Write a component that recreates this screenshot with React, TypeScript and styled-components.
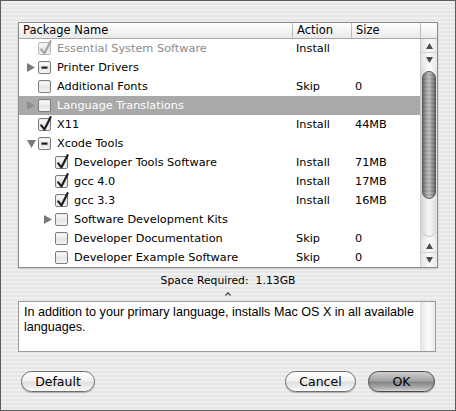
import React from "react";
import styled, { createGlobalStyle, css } from "styled-components";

type CheckState = "checked" | "mixed" | "none";

interface PackageRow {
  name: string;
  level: number;
  state: CheckState;
  disclosure?: "closed" | "open";
  disabled?: boolean;
  selected?: boolean;
  action: string;
  size: string;
}

const rows: PackageRow[] = [
  { name: "Essential System Software", level: 0, state: "checked", disabled: true, action: "Install", size: "" },
  { name: "Printer Drivers", level: 0, state: "mixed", disclosure: "closed", action: "", size: "" },
  { name: "Additional Fonts", level: 0, state: "none", action: "Skip", size: "0" },
  { name: "Language Translations", level: 0, state: "none", disclosure: "closed", selected: true, action: "", size: "" },
  { name: "X11", level: 0, state: "checked", action: "Install", size: "44MB" },
  { name: "Xcode Tools", level: 0, state: "mixed", disclosure: "open", action: "", size: "" },
  { name: "Developer Tools Software", level: 1, state: "checked", action: "Install", size: "71MB" },
  { name: "gcc 4.0", level: 1, state: "checked", action: "Install", size: "17MB" },
  { name: "gcc 3.3", level: 1, state: "checked", action: "Install", size: "16MB" },
  { name: "Software Development Kits", level: 1, state: "none", disclosure: "closed", action: "", size: "" },
  { name: "Developer Documentation", level: 1, state: "none", action: "Skip", size: "0" },
  { name: "Developer Example Software", level: 1, state: "none", action: "Skip", size: "0" },
];

const GlobalStyle = createGlobalStyle`
  html, body {
    margin: 0;
    padding: 0;
    background: #ececec;
  }
  * {
    box-sizing: border-box;
  }
`;

const Window = styled.div`
  width: 456px;
  height: 411px;
  border: 1px solid #5c5c5c;
  background-color: #ececec;
  background-image: repeating-linear-gradient(
    to bottom,
    #efefef 0px,
    #efefef 2px,
    #e6e6e6 2px,
    #e6e6e6 4px
  );
  padding: 21px 17px 0 17px;
  display: flex;
  flex-direction: column;
  font-family: "DejaVu Sans", "Liberation Sans", sans-serif;
  color: #000;
`;

const Table = styled.div`
  width: 420px;
  height: 246px;
  border: 1px solid #8a8a8a;
  background: #fff;
  display: flex;
  flex-direction: column;
  box-shadow: 0 1px 2px rgba(0, 0, 0, 0.15);
`;

const Header = styled.div`
  display: grid;
  grid-template-columns: 273px 59px 69px 1fr;
  height: 16px;
  border-bottom: 1px solid #a8a8a8;
  background: linear-gradient(to bottom, #ffffff, #f2f2f2 60%, #e9e9e9);
  font-size: 11.5px;
  line-height: 15px;
`;

const HeaderCell = styled.div<{ $divider?: boolean }>`
  padding-left: 4px;
  white-space: nowrap;
  ${(p) =>
    p.$divider &&
    css`
      border-left: 1px solid #bdbdbd;
    `}
`;

const Body = styled.div`
  flex: 1;
  display: flex;
  min-height: 0;
`;

const List = styled.div`
  flex: 1;
  display: flex;
  flex-direction: column;
`;

const Row = styled.div<{ $selected?: boolean }>`
  display: grid;
  grid-template-columns: 273px 59px 69px;
  height: 19px;
  align-items: center;
  font-size: 11.3px;
  background: ${(p) => (p.$selected ? "#a9a9a9" : "transparent")};
  color: ${(p) => (p.$selected ? "#fff" : "#000")};
`;

const NameCell = styled.div<{ $level: number; $disabled?: boolean }>`
  display: flex;
  align-items: center;
  padding-left: ${(p) => 8 + p.$level * 17}px;
  white-space: nowrap;
  color: ${(p) => (p.$disabled ? "#8c8c8c" : "inherit")};
`;

const Disclosure = styled.span`
  width: 11px;
  height: 19px;
  display: flex;
  align-items: center;
  justify-content: flex-start;
  flex-shrink: 0;
`;

const Box = styled.span<{ $disabled?: boolean }>`
  position: relative;
  width: 13px;
  height: 13px;
  flex-shrink: 0;
  border: 1px solid ${(p) => (p.$disabled ? "#b8b8b8" : "#7d7d7d")};
  border-radius: 2px;
  background: linear-gradient(to bottom, #ffffff, #e6e6e6 55%, #f4f4f4);
  box-shadow: inset 0 1px 1px rgba(0, 0, 0, 0.08);
  margin-right: 6px;
`;

const CheckMark = styled.svg`
  position: absolute;
  left: 0px;
  top: -3px;
  overflow: visible;
`;

const Label = styled.span``;

const Cell = styled.div`
  padding-left: 4px;
  white-space: nowrap;
`;

const Scrollbar = styled.div`
  width: 17px;
  border-left: 1px solid #c8c8c8;
  display: flex;
  flex-direction: column;
  background: linear-gradient(to right, #d6d6d6, #f4f4f4 35%, #fbfbfb 60%, #e2e2e2);
`;

const ArrowButton = styled.div<{ $divider?: boolean }>`
  height: 14px;
  display: flex;
  align-items: center;
  justify-content: center;
  background: linear-gradient(to right, #e4e4e4, #fafafa 50%, #e9e9e9);
  ${(p) =>
    p.$divider &&
    css`
      border-bottom: 1px solid #cfcfcf;
    `}
`;

const Track = styled.div`
  flex: 1;
  padding: 4px 1px 2px 1px;
  display: flex;
  flex-direction: column;
`;

const Thumb = styled.div`
  height: 128px;
  border-radius: 8px;
  border: 1px solid #5a5a5a;
  background:
    repeating-linear-gradient(to bottom, rgba(255, 255, 255, 0.08) 0 2px, rgba(0, 0, 0, 0.05) 2px 4px),
    linear-gradient(to right, #6a6a6a, #a4a4a4 30%, #bdbdbd 50%, #a0a0a0 70%, #666666);
`;

const TrackEnd = styled.div`
  flex: 1;
  border-radius: 0 0 8px 8px;
  background: linear-gradient(to right, #d8d8d8, #f8f8f8 50%, #dcdcdc);
  border-bottom: 1px solid #c4c4c4;
`;

const Summary = styled.div`
  height: 22px;
  display: flex;
  justify-content: center;
  align-items: center;
  gap: 7px;
  font-size: 10.8px;
  padding-top: 3px;
`;

const Splitter = styled.div`
  height: 10px;
  display: flex;
  justify-content: center;
  align-items: flex-start;
  padding-top: 2px;
`;

const Description = styled.div`
  width: 418px;
  height: 51px;
  margin-top: 1px;
  border: 1px solid #9a9a9a;
  background: #fff;
  display: flex;
`;

const DescriptionText = styled.div`
  flex: 1;
  padding: 3px 0 0 5px;
  font-family: "Liberation Sans", Arial, sans-serif;
  font-size: 12.6px;
  line-height: 15px;
`;

const DescriptionTrack = styled.div`
  width: 15px;
  flex-shrink: 0;
  border-left: 1px solid #e2e2e2;
  background: linear-gradient(to right, #e6e6e6, #fafafa 50%, #ececec);
`;

const ButtonRow = styled.div`
  display: flex;
  align-items: center;
  margin-top: 19px;
  padding: 0 3px;
`;

const Spacer = styled.div`
  flex: 1;
`;

const PillButton = styled.button<{ $default?: boolean; $width: number }>`
  width: ${(p) => p.$width}px;
  height: 21px;
  border-radius: 11px;
  border: 1px solid ${(p) => (p.$default ? "#4a4a4a" : "#6e6e6e")};
  font-family: "DejaVu Sans", "Liberation Sans", sans-serif;
  font-size: 12.5px;
  color: #000;
  padding: 0;
  line-height: 19px;
  background: ${(p) =>
    p.$default
      ? "linear-gradient(to bottom, #d0d0d0 0%, #a3a3a3 45%, #858585 55%, #b0b0b0 85%, #d6d6d6 100%)"
      : "linear-gradient(to bottom, #ffffff 0%, #f2f2f2 45%, #e0e0e0 55%, #f0f0f0 85%, #ffffff 100%)"};
  box-shadow: 0 1px 1px rgba(0, 0, 0, 0.25);
  & + & {
    margin-left: 12px;
  }
`;

function Check({ state, disabled }: { state: CheckState; disabled?: boolean }) {
  const ink = disabled ? "#a4a4a4" : "#1e1e1e";
  return (
    <Box $disabled={disabled}>
      {state === "checked" && (
        <CheckMark width="13" height="16" viewBox="0 0 13 16">
          <path d="M2.2 9.4 L5.4 13.4 L11.6 1.2" fill="none" stroke={ink} strokeWidth="2.2" strokeLinecap="round" strokeLinejoin="round" />
        </CheckMark>
      )}
      {state === "mixed" && (
        <CheckMark width="13" height="16" viewBox="0 0 13 16">
          <rect x="2.5" y="7.5" width="6" height="2.2" fill={ink} />
        </CheckMark>
      )}
    </Box>
  );
}

function Triangle({ open, light }: { open: boolean; light?: boolean }) {
  const fill = light ? "#8e8e8e" : "#7a7a7a";
  return open ? (
    <svg width="9" height="8" viewBox="0 0 9 8">
      <path d="M0 0 L9 0 L4.5 8 Z" fill={fill} />
    </svg>
  ) : (
    <svg width="8" height="9" viewBox="0 0 8 9">
      <path d="M0 0 L8 4.5 L0 9 Z" fill={fill} />
    </svg>
  );
}

function Arrow({ up }: { up: boolean }) {
  return (
    <svg width="7" height="6" viewBox="0 0 7 6">
      <path d={up ? "M3.5 0 L7 6 L0 6 Z" : "M0 0 L7 0 L3.5 6 Z"} fill="#4c4c4c" />
    </svg>
  );
}

export default function App() {
  return (
    <>
      <GlobalStyle />
      <Window>
        <Table>
          <Header>
            <HeaderCell>Package Name</HeaderCell>
            <HeaderCell $divider>Action</HeaderCell>
            <HeaderCell $divider>Size</HeaderCell>
            <HeaderCell $divider />
          </Header>
          <Body>
            <List>
              {rows.map((r) => (
                <Row key={r.name} $selected={r.selected}>
                  <NameCell $level={r.level} $disabled={r.disabled}>
                    <Disclosure>
                      {r.disclosure && <Triangle open={r.disclosure === "open"} light={r.selected} />}
                    </Disclosure>
                    <Check state={r.state} disabled={r.disabled} />
                    <Label>{r.name}</Label>
                  </NameCell>
                  <Cell>{r.action}</Cell>
                  <Cell>{r.size}</Cell>
                </Row>
              ))}
            </List>
            <Scrollbar>
              <ArrowButton $divider>
                <Arrow up />
              </ArrowButton>
              <ArrowButton>
                <Arrow up={false} />
              </ArrowButton>
              <Track>
                <Thumb />
                <TrackEnd />
              </Track>
              <ArrowButton $divider>
                <Arrow up />
              </ArrowButton>
              <ArrowButton>
                <Arrow up={false} />
              </ArrowButton>
            </Scrollbar>
          </Body>
        </Table>
        <Summary>
          <span>Space Required:</span>
          <span>1.13GB</span>
        </Summary>
        <Splitter>
          <svg width="6" height="4" viewBox="0 0 6 4">
            <path d="M0.5 3.5 L3 0.8 L5.5 3.5" fill="none" stroke="#444" strokeWidth="1.2" />
          </svg>
        </Splitter>
        <Description>
          <DescriptionText>
            In addition to your primary language, installs Mac OS X in all available languages.
          </DescriptionText>
          <DescriptionTrack />
        </Description>
        <ButtonRow>
          <PillButton $width={74}>Default</PillButton>
          <Spacer />
          <PillButton $width={71}>Cancel</PillButton>
          <PillButton $width={67} $default>
            OK
          </PillButton>
        </ButtonRow>
      </Window>
    </>
  );
}
